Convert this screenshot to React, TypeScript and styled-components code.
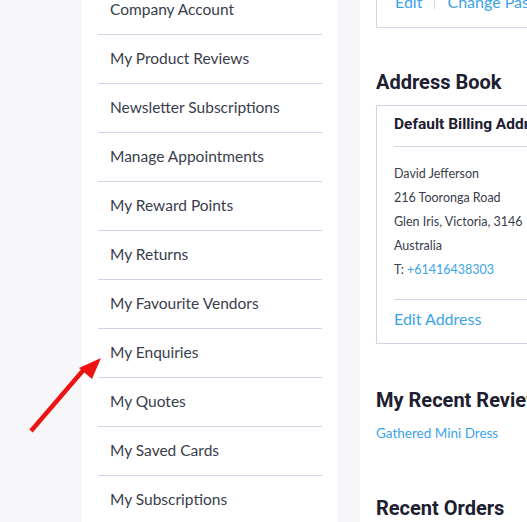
import styled, { createGlobalStyle } from 'styled-components';

const GlobalStyle = createGlobalStyle`
  html, body {
    margin: 0;
    padding: 0;
    background: #f7f7fa;
  }
  body {
    font-family: Lato, "Open Sans", Arial, sans-serif;
    overflow: hidden;
  }
`;

const menuItems = [
  'Company Account',
  'My Product Reviews',
  'Newsletter Subscriptions',
  'Manage Appointments',
  'My Reward Points',
  'My Returns',
  'My Favourite Vendors',
  'My Enquiries',
  'My Quotes',
  'My Saved Cards',
  'My Subscriptions',
];

const addressLines = ['David Jefferson', '216 Tooronga Road', 'Glen Iris, Victoria, 3146', 'Australia'];

function PointerArrow() {
  return (
    <ArrowWrap>
      <svg width="90" height="100" viewBox="0 0 90 100">
        <line x1="11" y1="91" x2="66" y2="27" stroke="#ec1313" strokeWidth="4.5" strokeLinecap="butt" />
        <polygon points="81,18 59,28 72,39" fill="#ec1313" />
      </svg>
    </ArrowWrap>
  );
}

export default function App() {
  return (
    <>
      <GlobalStyle />
      <Page>
        <Gutter>
          <PointerArrow />
        </Gutter>
        <Sidebar>
          <MenuList>
            {menuItems.map((item) => (
              <MenuItem key={item}>{item}</MenuItem>
            ))}
          </MenuList>
        </Sidebar>
        <Main>
          <TopCard>
            <LinkRow>
              <BlueLink>Edit</BlueLink>
              <Pipe />
              <BlueLink>Change Password</BlueLink>
            </LinkRow>
          </TopCard>

          <SectionTitle $top={42}>Address Book</SectionTitle>
          <Card>
            <CardTitle>Default Billing Address</CardTitle>
            <Divider />
            <AddressBlock>
              {addressLines.map((line) => (
                <AddressLine key={line}>{line}</AddressLine>
              ))}
              <AddressLine>
                T: <SmallLink>+61416438303</SmallLink>
              </AddressLine>
            </AddressBlock>
            <Divider />
            <EditLink>Edit Address</EditLink>
          </Card>

          <SectionTitle $top={44}>My Recent Reviews</SectionTitle>
          <ReviewLink>Gathered Mini Dress</ReviewLink>

          <SectionTitle $top={54}>Recent Orders</SectionTitle>
        </Main>
      </Page>
    </>
  );
}

const Page = styled.div`
  display: flex;
  height: 522px;
  overflow: hidden;
  background: #f7f7fa;
`;

const Gutter = styled.div`
  flex: 0 0 82px;
  position: relative;
`;

const ArrowWrap = styled.div`
  position: absolute;
  left: 20px;
  top: 340px;
  z-index: 2;
  line-height: 0;
`;

const Sidebar = styled.aside`
  flex: 0 0 256px;
  background: #ffffff;
  padding: 0 16px;
  box-sizing: border-box;
`;

const MenuList = styled.ul`
  list-style: none;
  margin: -14px 0 0;
  padding: 0;
`;

const MenuItem = styled.li`
  display: flex;
  align-items: center;
  height: 49px;
  padding: 0 0 3px 12px;
  box-sizing: border-box;
  border-bottom: 1px solid #d5d3e5;
  font-size: 15.5px;
  color: #3a3d4c;
`;

const Main = styled.main`
  flex: 0 0 520px;
  margin-left: 22px;
  background: #ffffff;
  padding-left: 16px;
  box-sizing: border-box;
`;

const TopCard = styled.div`
  border: 1px solid #d5d3e5;
  border-top: none;
  margin-top: -20px;
  padding: 12px 18px 16px;
`;

const LinkRow = styled.div`
  display: flex;
  align-items: center;
  gap: 12px;
`;

const BlueLink = styled.span`
  font-size: 16px;
  color: #3ba4e8;
  white-space: nowrap;
`;

const Pipe = styled.span`
  width: 1px;
  height: 14px;
  background: #d5d3e5;
`;

const SectionTitle = styled.h2<{ $top: number }>`
  margin: ${({ $top }) => $top}px 0 11px;
  font-family: Roboto, Arial, sans-serif;
  font-size: 20px;
  line-height: 24px;
  font-weight: 700;
  color: #1d2030;
  white-space: nowrap;
`;

const Card = styled.div`
  border: 1px solid #d5d3e5;
  padding: 8px 0 14px 17px;
`;

const CardTitle = styled.div`
  font-family: Roboto, Arial, sans-serif;
  font-size: 15.5px;
  line-height: 20px;
  font-weight: 700;
  color: #1d2030;
  white-space: nowrap;
  margin-bottom: 12px;
`;

const Divider = styled.div`
  height: 1px;
  background: #d5d3e5;
`;

const AddressBlock = styled.div`
  padding: 15px 0 17px;
`;

const AddressLine = styled.div`
  font-size: 12.5px;
  line-height: 24px;
  color: #3a3d4c;
  white-space: nowrap;
`;

const SmallLink = styled.span`
  color: #3ba4e8;
`;

const EditLink = styled.div`
  margin-top: 9px;
  font-size: 16px;
  line-height: 20px;
  color: #3ba4e8;
`;

const ReviewLink = styled.div`
  margin-top: 12px;
  font-size: 13.5px;
  line-height: 18px;
  color: #3ba4e8;
`;
